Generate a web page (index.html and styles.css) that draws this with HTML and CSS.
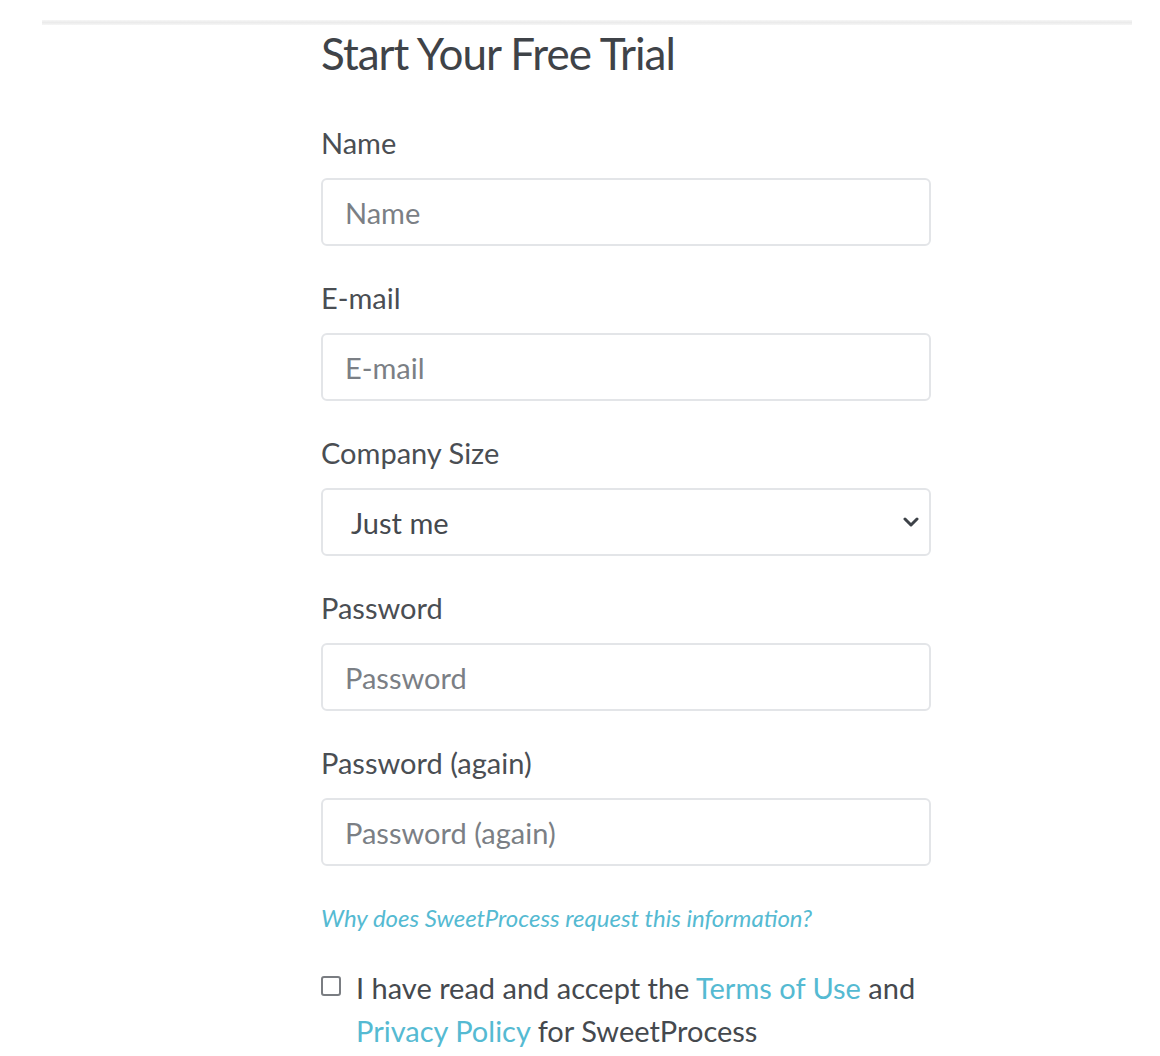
FILE: index.html
```html
<!DOCTYPE html>
<html>
<head>
<meta charset="utf-8">
<link rel="stylesheet" href="styles.css">
</head>
<body>
<div class="rule"></div>
<form class="signup">
  <h1 class="title">Start Your Free Trial</h1>
  <div class="field">
    <label class="label">Name</label>
    <div class="input"><span class="ph">Name</span></div>
  </div>
  <div class="field">
    <label class="label">E-mail</label>
    <div class="input"><span class="ph">E-mail</span></div>
  </div>
  <div class="field">
    <label class="label">Company Size</label>
    <div class="input select"><span class="val">Just me</span>
      <svg class="chev" width="16" height="10" viewBox="0 0 16 10"><path d="M2 2 L8 8 L14 2" fill="none" stroke="#3d4248" stroke-width="3" stroke-linecap="round" stroke-linejoin="round"/></svg>
    </div>
  </div>
  <div class="field">
    <label class="label">Password</label>
    <div class="input"><span class="ph">Password</span></div>
  </div>
  <div class="field">
    <label class="label">Password (again)</label>
    <div class="input"><span class="ph">Password (again)</span></div>
  </div>
  <a class="why">Why does SweetProcess request this information?</a>
  <div class="terms">
    <span class="box"></span>
    <p class="terms-text">I have read and accept the <a class="lnk">Terms of Use</a> and <a class="lnk">Privacy Policy</a> for SweetProcess</p>
  </div>
</form>
</body>
</html>
```

FILE: styles.css
```css
html, body {
  margin: 0;
  padding: 0;
  background: #fff;
}
body {
  font-family: Lato, "Open Sans", sans-serif;
  color: #45494e;
  padding-top: 20px;
}
.rule {
  margin: 0 28px 0 42px;
  height: 5px;
  background: linear-gradient(#f6f6f6, #ebebeb 50%, #f6f6f6);
}
.signup {
  margin-left: 321px;
  width: 610px;
  display: flex;
  flex-direction: column;
}
.title {
  margin: 2px 0 47px;
  font-weight: 400;
  font-size: 44px;
  line-height: 52px;
  color: #3f4348;
  letter-spacing: -1px;
}
.field {
  display: flex;
  flex-direction: column;
  margin-bottom: 35px;
}
.field:last-of-type {
  margin-bottom: 34px;
}
.label {
  font-size: 29px;
  line-height: 34px;
  margin-bottom: 18px;
  color: #4a4e53;
}
.input {
  height: 64px;
  border: 2px solid #e3e5e8;
  border-radius: 6px;
  display: flex;
  align-items: center;
  padding: 0 22px;
  font-size: 29px;
}
.ph {
  color: #7b7f85;
}
.select {
  justify-content: space-between;
  padding: 0 10px 0 28px;
}
.val {
  color: #45494e;
}
.why {
  margin-top: 2px;
  font-style: italic;
  font-size: 24px;
  line-height: 30px;
  color: #55bad2;
}
.terms {
  display: flex;
  gap: 15px;
  margin-top: 33px;
  align-items: flex-start;
}
.box {
  flex: none;
  width: 16px;
  height: 16px;
  border: 2px solid #7a7d82;
  border-radius: 3px;
  margin-top: 10px;
}
.terms-text {
  margin: 0;
  font-size: 29px;
  line-height: 43px;
  color: #45494e;
  width: 590px;
}
.lnk {
  color: #55bad2;
}
```
